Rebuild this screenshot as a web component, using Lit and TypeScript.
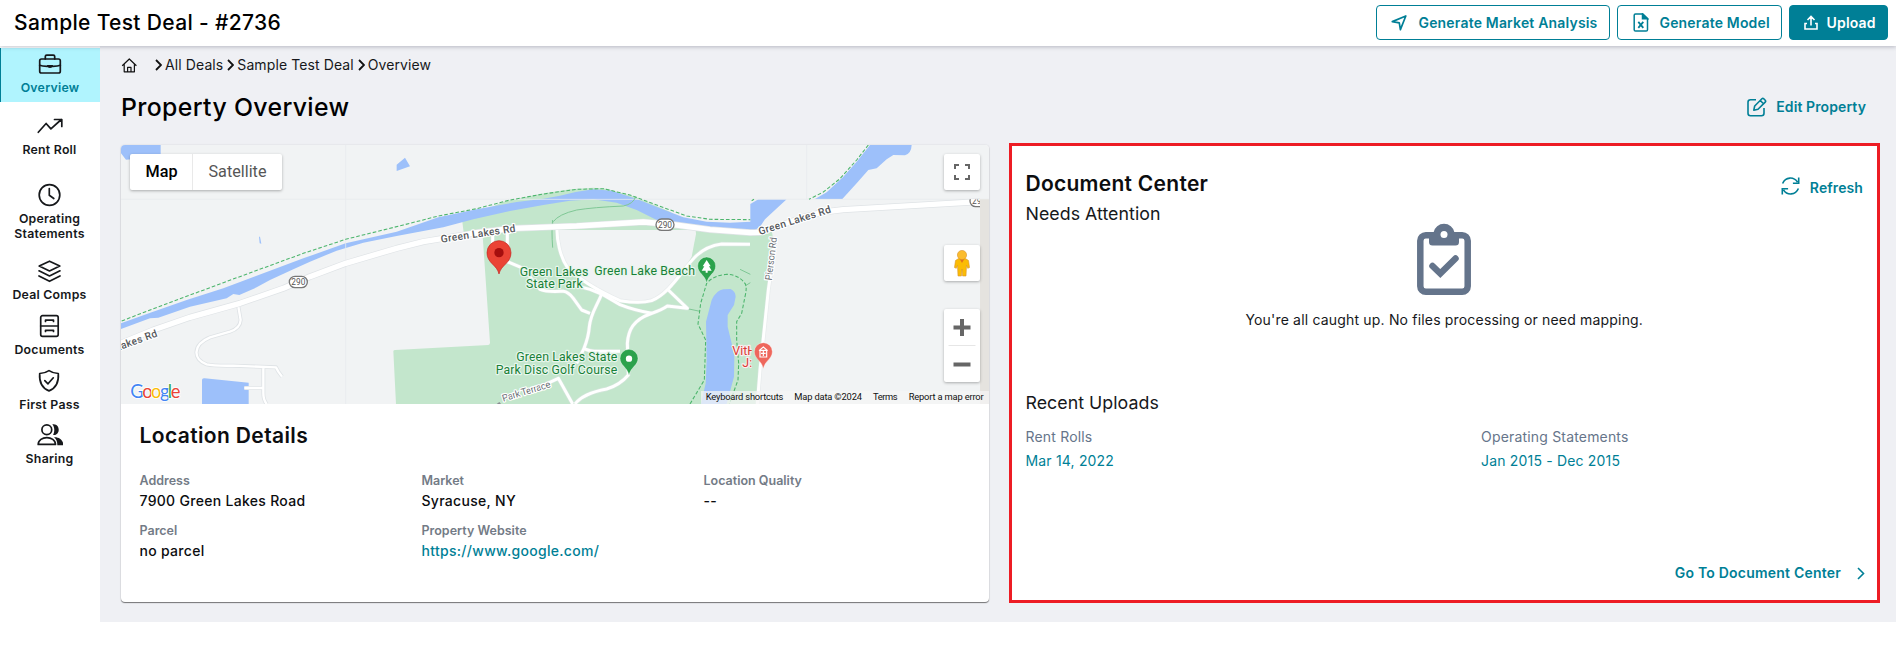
import { LitElement, html, css, svg } from "lit";
import { customElement } from "lit/decorators.js";

const navIcons: Record<string, unknown> = {
  Overview: svg`<rect x="2.200" y="7" width="20.600" height="14" rx="1.800"/><path d="M7.800 7V4.500c0-.9.6-1.400 1.400-1.400h6.600c.8 0 1.400.5 1.400 1.400V7M2.200 13.300c2 .9 4.500 1 7.500 1M15.300 14.300c3 0 5.500-.1 7.500-1"/><path d="M9.500 13h6c0 2-1 3-3 3s-3-1-3-3z" fill="currentColor" stroke="none"/>`,
  "Rent Roll": svg`<path d="M.800 18.300 8.600 9.500l4.800 5.400L23.800 5.500M17 5.500h7.300v7"/>`,
  "Operating Statements": svg`<circle cx="12" cy="12" r="10.300"/><path d="M11.800 5.500v6.800l4.500 3.200"/>`,
  "Deal Comps": svg`<path d="M12 2.200 22.300 7.100 12 11.900 1.700 7.100z"/><path d="M1.500 11.800 12 16.900l10.500-5.100M1.500 16.900 12 22.300l10.500-5.400"/>`,
  Documents: svg`<rect x="3.200" y="1.700" width="17.500" height="20.600" rx="1.800"/><path d="M3.200 12h17.500M8 7.400V6.200h8v1.200M8 17.500v-1.200h8v1.200"/>`,
  "First Pass": svg`<path d="M11.500 1.600c3 2 6.200 2.800 9.300 2.900.6 8.500-2.500 14.700-9.300 17.400C4.700 19.200 1.600 13 2.200 4.500c3.100-.1 6.300-.9 9.300-2.900z"/><path d="m7.300 11.600 3.200 3.200 5.300-6"/>`,
  Sharing: svg`<circle cx="9.300" cy="6.700" r="4.900"/><path d="M.700 21.400c.1-9 17.200-9 17.300 0z"/><path d="M14.800 1.300c8-1.700 8.800 11.300.8 10.700 1.600-3 1.800-7.600-.8-10.700zM16.500 14.200c5.500-.3 9 2.800 9.500 8h-6.200c.1-3.500-.8-6-3.300-8z" fill="currentColor" stroke="none"/>`,
};

const nav: [string, string][] = [
  ["Overview", "active"],
  ["Rent Roll", "wide"],
  ["Operating Statements", "two"],
  ["Deal Comps", ""],
  ["Documents", ""],
  ["First Pass", "last"],
  ["Sharing", ""],
];

const details: [string, string][] = [
  ["Address", "7900 Green Lakes Road"],
  ["Market", "Syracuse, NY"],
  ["Location Quality", "--"],
  ["Parcel", "no parcel"],
  ["Property Website", "https://www.google.com/"],
];

const mainRoad =
  "M20 645 130 600 240 562 390 520 520 475 600 440 707 400 860 355 940 335 1000 325 1100 308 1210 295 1400 288 1600 276 1690 284 1800 299 1920 308 1950 307 2000 290 2080 262 2140 246 2200 239 2610 215";
const parkRoads = [
  "M1341 290C1340 330 1350 380 1372 412C1410 450 1470 485 1530 512Q1590 522 1625 512C1680 490 1720 415 1758 378Q1790 348 1835 342L1920 343",
  "M1148 300V345M1192 300V395L1240 415 1290 478Q1310 486 1350 484H1360Q1375 486 1390 505L1415 540 1440 550",
  "M1372 460 1440 478 1475 492 1530 524Q1570 540 1625 550",
  "M1475 492C1460 530 1442 550 1438 590Q1436 620 1422 655Q1440 665 1470 664L1530 664M1422 655 1400 700",
  "M1675 480 1732 535 1672 528Q1655 540 1620 552C1570 570 1555 600 1552 640L1555 735Q1530 765 1490 777Q1420 790 1395 822",
  "M1270 780 1345 745 1388 822",
  "M1997 320 1975 480 1950 720 1942 822",
];
const sideRoads =
  "M385 530 392 570Q390 595 360 605L300 622C245 645 250 690 290 703Q310 708 370 707L498 712 505 725 516 740M460 710V790Q460 810 470 822M403 774H460";

@customElement("deal-map")
class DealMap extends LitElement {
  static styles = css`
    :host { display: block; position: relative; height: 259px; overflow: hidden; font-family: Roboto, sans-serif; letter-spacing: normal; }
    .canvas { display: block; }
    .water { fill: #9dc0fa; }
    .park { fill: #c3e6cc; }
    .land { fill: #f1f3f4; }
    .seam { stroke: #e9ebed; stroke-width: 3; fill: none; }
    .case { fill: none; stroke: #dfe3e6; stroke-linejoin: round; }
    .road { fill: none; stroke: #fff; stroke-linejoin: round; }
    .trail { fill: none; stroke: #4db56d; stroke-width: 3.200; stroke-dasharray: 11 6; }
    .path { fill: none; stroke: #7fc795; stroke-width: 3; }
    .lbl { paint-order: stroke; stroke: #fff; stroke-width: 7; stroke-linejoin: round; }
    .roadname { font-size: 31px; font-weight: 500; fill: #55585c; }
    .minor { font-size: 29px; fill: #6b6f75; }
    .poi { font-size: 37px; fill: #188038; stroke: #e8f6ec; font-weight: 400; }
    .red { fill: #d93a36; stroke: #fbeeee; }
    .shield { fill: #fff; stroke: #777; stroke-width: 4; }
    .num { font-size: 25px; fill: #555; text-anchor: middle; }
    .foot { font-size: 28px; fill: #111; }
    .logo { font-family: Lato, sans-serif; font-size: 55px; paint-order: stroke; stroke: #fff; stroke-width: 5; }
    .types { position: absolute; left: 9px; top: 9px; display: flex; height: 36px; background: #fff; border-radius: 2px; box-shadow: 0 1px 3px rgba(0, 0, 0, .3); font-size: 16.200px; line-height: 35px; color: #565656; text-align: center; }
    .type { width: 89px; }
    .on { width: 63px; color: #000; font-weight: 500; box-shadow: inset -1px 0 #e9e9e9; }
    .tools { position: absolute; right: 9px; top: 9px; display: grid; }
    .tool { display: grid; place-items: center; width: 36px; height: 36px; background: #fff; border-radius: 2px; box-shadow: 0 1px 3px rgba(0, 0, 0, .3); }
    .peg { margin-top: 55px; }
    .zoom { height: 73px; margin-top: 28px; }
  `;
  private pin(x: number, y: number, color: string, inner: unknown) {
    return svg`<g transform="translate(${x} ${y})"><path d="M0 0C-5-25-27-29-27-51a27 27 0 0 1 54 0C27-29 5-25 0 0z" fill=${color} stroke="#fff" stroke-opacity=".55" stroke-width="2"/>${inner}</g>`;
  }
  render() {
    return html`
      <svg class="canvas" width="868" height="259" viewBox="33 45 2604 777">
        <rect class="land" x="33" y="45" width="2604" height="777"/>
        <path class="park" d="M1057 275 1130 238 1180 215 1290 192 1380 178 1450 173 1490 176 1575 200 1680 245 1760 300H1985L1990 330 1942 822H858L850 664Q850 660 856 660L1135 645Q1140 644 1140 638L1118 318 1062 316z"/>
        <path class="land" d="M1345 300H1757L1758 312 1745 380 1715 430 1680 478Q1650 512 1600 518H1545Q1450 485 1372 412Q1345 370 1345 300z"/>
        <path class="water" d="M33 45H152V80L48 89 33 70zM860 123V104L885 83 900 109zM447 320 450 320 454 341 449 340zM276 822V750Q276 744 284 745L416 758V822z"/>
        <path class="water" d="M33 580 125 547 230 510 340 475 460 430 580 385 707 340 860 305 985 262 1100 238 1220 216 1300 206 1350 197 1397 186 1450 178 1505 182 1580 207 1650 235 1720 262 1790 275 1860 278 1921 275V222L1945 208H2030L1995 240 1965 268 1950 290 1935 300 1830 298 1730 290 1640 270 1580 240 1520 218 1450 208 1380 212 1300 225 1200 243 1090 268 1000 292 860 318 760 338 680 362 600 395 550 418 480 450 440 472 388 495 370 492 350 505 240 530 145 563 120 565 33 597z"/>
        <path class="water" d="M2280 45H2405Q2404 70 2385 76L2350 75 2330 88 2300 115 2275 120 2240 160 2197 207H2115L2150 187 2200 140 2240 95z"/>
        <path class="water" d="M1788 575 1805 510Q1820 480 1840 478L1862 477Q1877 485 1877 500L1872 525 1853 555V590L1865 640 1873 680 1872 740 1850 822H1773L1787 760 1790 690z"/>
        <path class="seam" d="M33 208H2637M707 45V822M2090 45V208" stroke-opacity=".8"/>
        <path class="path" d="M1330 275Q1345 253 1400 240 1450 232 1540 228 1570 222 1577 200M1328 270Q1324 300 1328 353M1328 275V300M1890 418 1921 433M1737 537 1770 544M1905 468 1921 458"/>
        <path class="trail" d="M35 573 125 538 340 458 580 370 707 328 880 285 985 258 1100 236 1200 210 1300 192 1400 178 1480 176 1560 195 1640 225 1730 258 1800 268 1921 269M2275 45 2240 90 2190 146 2140 186 2097 208M1925 212 1932 208"/>
        <path class="trail" d="M1740 822 1783 750 1787 630 1764 582 1772 520 1790 460Q1810 436 1850 433 1885 434 1905 460 1912 470 1905 500L1895 550 1880 575V630L1886 700 1884 750 1858 822"/>
        <path class="case" stroke-width="12" d=${sideRoads}/>
        <path class="road" stroke-width="7" d=${sideRoads}/>
        ${parkRoads.map((d) => svg`<path class="case" stroke-width="13" stroke-opacity=".55" d=${d}/>`)}
        ${parkRoads.map((d) => svg`<path class="road" stroke-width="9" d=${d}/>`)}
        <path class="case" stroke-width="20" d=${mainRoad}/>
        <path class="road" stroke-width="16" d=${mainRoad}/>
        <rect x="2610" y="208" width="27" height="614" fill="#e5e3df"/>

        ${[[565, 456], [1665, 284]].map(([x, y]) => svg`
          <rect class="shield" x=${x - 27} y=${y - 17} width="54" height="34" rx="17"/>
          <text class="num" x=${x} y=${y + 9}>290</text>`)}
        <svg x="2570" y="208" width="40" height="30" viewBox="2570 208 40 30">
          <rect class="shield" x="2580" y="196" width="54" height="34" rx="17"/>
          <text class="num" x="2607" y="223">290</text>
        </svg>

        <text class="lbl roadname" transform="translate(20 664) rotate(-20)" textLength="132">Lakes Rd</text>
        <text class="lbl roadname" transform="translate(994 338) rotate(-8.500)" textLength="226">Green Lakes Rd</text>
        <text class="lbl roadname" transform="translate(1949 315) rotate(-17.500)" textLength="226">Green Lakes Rd</text>
        <text class="lbl minor" transform="translate(1985 452) rotate(-83)" textLength="130">Pierson Rd</text>
        <text class="lbl minor" transform="translate(1180 815) rotate(-17)" textLength="150">Park Terrace</text>
        <path d="M1160 822l8-6 5 6z" fill="#8a8d92"/>

        <text class="lbl poi" x="1229" y="437" textLength="206">Green Lakes</text>
        <text class="lbl poi" x="1248" y="474" textLength="170">State Park</text>
        <text class="lbl poi" x="1453" y="434" textLength="302">Green Lake Beach</text>
        <text class="lbl poi" x="1219" y="693" textLength="303">Green Lakes State</text>
        <text class="lbl poi" x="1157" y="731" textLength="365">Park Disc Golf Course</text>
        <svg x="1850" y="630" width="75" height="100" viewBox="1850 630 75 100">
          <text class="lbl poi red" x="1867" y="674">VitH</text>
          <text class="lbl poi red" x="1897" y="712">J:</text>
        </svg>

        ${this.pin(1790, 459, "#2ba24c", svg`<path d="M0-69 12-50H7L15-37H3V-31H-3V-37H-15L-7-50H-12z" fill="#fff"/>`)}
        ${this.pin(1557, 736, "#2ba24c", svg`<circle cy="-50" r="9.500" fill="#fff"/>`)}
        ${this.pin(1960, 716, "#ee675c", svg`<path d="M-13-54 0-65 13-54M-10-55V-35H10V-55zM0-53V-38M-7-46H7" fill="none" stroke="#fff" stroke-width="3.500"/>`)}
        <path d="M1167 432C1161 404 1131 400 1131 368a36 36 0 0 1 72 0C1203 400 1173 404 1167 432z" fill="#ea4335" stroke="#c5221f" stroke-width="2"/>
        <circle cx="1167" cy="368" r="14" fill="#a50e0e"/>

        <text class="logo" x="61" y="803" textLength="150"><tspan fill="#4285f4">G</tspan><tspan fill="#ea4335">o</tspan><tspan fill="#fbbc04">o</tspan><tspan fill="#4285f4">g</tspan><tspan fill="#34a853">l</tspan><tspan fill="#ea4335">e</tspan></text>
        <rect x="1773" y="783" width="864" height="39" fill="#f5f5f5" fill-opacity=".72"/>
        <text class="foot" x="1787" y="810" textLength="233">Keyboard shortcuts</text>
        <text class="foot" x="2053" y="810" textLength="203">Map data ©2024</text>
        <text class="foot" x="2289" y="810" textLength="74">Terms</text>
        <text class="foot" x="2396" y="810" textLength="225">Report a map error</text>
      </svg>
      <div class="types"><div class="type on">Map</div><div class="type">Satellite</div></div>
      <div class="tools">
        <div class="tool"><svg width="16" height="16" viewBox="0 0 16 16" fill="none" stroke="#666" stroke-width="2"><path d="M1 5V1h4M11 1h4v4M15 11v4h-4M5 15H1v-4"/></svg></div>
        <div class="tool peg"><svg width="16" height="27" viewBox="0 0 16 27"><path d="M1.500 10.500 4.500 8.600h7l3 1.900 1 7-1.800.8-1.200-3-.5 10.700H8.600L8 19l-.6 7H4L3.500 15.300l-1.200 3-1.800-.8z" fill="#fbbc04" stroke="#d9932b" stroke-width=".6"/><path d="M5.500 8.800h5L8 13z" fill="#e2711d"/><circle cx="8" cy="5" r="4.600" fill="#fbbc2e" stroke="#d9932b" stroke-width=".6"/></svg></div>
        <div class="tool zoom"><svg width="28" height="73" viewBox="0 0 28 73" fill="none" stroke="#666" stroke-width="4"><path d="M14 10v17M5.500 18.500h17M5.500 55.500h17"/><path d="M.500 36.500h27" stroke="#e6e6e6" stroke-width="1"/></svg></div>
      </div>`;
  }
}

@customElement("app-root")
class AppRoot extends LitElement {
  static styles = css`
    :host { display: block; height: 648px; background: #fff; font-family: Inter, sans-serif; font-size: 14px; line-height: 20px; letter-spacing: .18px; color: #16181b; overflow: hidden; }
    * { box-sizing: border-box; }
    svg { flex: none; display: block; }
    .top { display: flex; align-items: flex-start; height: 46px; padding: 5px 8px 0 14px; background: #fff; position: relative; z-index: 1; box-shadow: 0 1px 4px rgba(40, 40, 70, .28); }
    .deal { flex: 1; font-size: 21px; font-weight: 500; line-height: 35px; letter-spacing: .33px; color: #000; }
    .btns { display: flex; gap: 7px; }
    .btn { display: flex; align-items: center; height: 35px; border: 1px solid #007f96; border-radius: 4px; color: #007f96; font-weight: 600; background: #fff; white-space: nowrap; }
    .market { width: 234px; padding-left: 14px; } .market svg { margin-right: 11.500px; }
    .model { width: 165px; padding-left: 15px; } .model svg { margin-right: 10.500px; }
    .upload { width: 99px; padding-left: 14px; background: #007f96; color: #fff; } .upload svg { margin-right: 8.500px; }
    .body { display: flex; }
    .nav { width: 100px; height: 576px; padding-top: 2px; background: #fff; font-size: 12.300px; font-weight: 600; line-height: 15px; letter-spacing: .25px; text-align: center; }
    .item { display: grid; justify-items: center; gap: 4px; margin-bottom: 12px; padding: 0 8px 0 7px; }
    .active { height: 54px; padding-top: 4px; background: #b0f4fe; border-left: 1px solid #007f96; align-content: start; }
    .active .name { color: #007f96; }
    .wide { margin-bottom: 26px; }
    .two { margin-bottom: 18px; }
    .last { margin-bottom: 11px; }
    .main { flex: 1; height: 576px; padding: 9px 16px 0 21px; background: #eff0f4; }
    .crumbs { display: flex; align-items: center; height: 20px; letter-spacing: .1px; }
    .crumbs .sep { margin: 0 3px 0 4px; }
    .crumbs .first { margin-left: 18px; }
    .head { display: flex; justify-content: space-between; align-items: center; height: 32px; margin-top: 16px; padding-right: 14px; }
    .h1 { font-size: 24.800px; font-weight: 500; line-height: 34px; letter-spacing: .36px; color: #000; }
    .link { display: flex; align-items: center; color: #007f96; font-weight: 600; letter-spacing: .1px; }
    .edit { gap: 9px; }
    .cols { display: grid; grid-template-columns: 868px 871px; gap: 20px; margin-top: 20px; }
    .card { height: 457px; margin-top: 2px; background: #fff; border-radius: 4px; box-shadow: 0 1px 1px rgba(0, 0, 0, .5), 0 0 2px rgba(0, 0, 0, .12); overflow: hidden; }
    .loc { padding: 18px 18.500px; }
    .h2 { font-size: 21px; font-weight: 600; line-height: 28px; letter-spacing: .37px; color: #0c0d0f; }
    .fields { display: grid; grid-template-columns: repeat(3, 282px); row-gap: 10px; margin-top: 21px; }
    .label { font-size: 12.500px; font-weight: 600; letter-spacing: 0; color: #737b86; }
    .value { font-weight: 500; letter-spacing: .3px; color: #0c0d0f; }
    .url { color: #007f96; }
    .doc { display: flex; flex-direction: column; height: 460px; padding: 24px 14px 0 13.500px; border: 3px solid #ed1c24; background: #fff; }
    .doc .h2 { letter-spacing: .27px; }
    .dochead { display: flex; justify-content: space-between; height: 28px; }
    .refresh { height: 20px; margin-top: 8px; gap: 10px; }
    .refresh svg { margin-top: -4px; }
    .h3 { font-size: 17.800px; line-height: 24px; margin-top: 4px; letter-spacing: .03px; }
    .empty { display: grid; justify-items: center; margin-top: -3px; }
    .msg { margin-top: 15px; }
    .recent { margin-top: 61px; }
    .ups { display: grid; grid-template-columns: 455.500px 1fr; row-gap: 4px; margin-top: 12px; }
    .muted { color: #66758a; }
    .teal { color: #007f96; }
    .go { align-self: flex-end; letter-spacing: .21px; gap: 16px; margin: 92px -2px 0 0; }
  `;
  render() {
    const sep = (c = "") => html`<svg class="sep ${c}" width="7" height="12" viewBox="0 0 7 12" fill="none" stroke="#111" stroke-width="1.800"><path d="m1 1 5 5-5 5"/></svg>`;
    return html`
      <header class="top">
        <div class="deal">Sample Test Deal - #2736</div>
        <div class="btns">
          <div class="btn market"><svg width="16" height="16" viewBox="0 0 16 16" fill="none" stroke="currentColor" stroke-width="1.700" stroke-linejoin="round"><path d="M14.800 1 9.400 14.600 8.300 7.900 1.300 6.600z"/></svg><span>Generate Market Analysis</span></div>
          <div class="btn model"><svg width="16" height="19" viewBox="0 0 16 19" fill="none" stroke="currentColor" stroke-width="1.500"><path d="M9.800 1H2.500Q1.200 1 1.200 2.300V16.700Q1.200 18 2.500 18H13.200Q14.500 18 14.500 16.700V5.500z"/><path d="M9.500 1v4.700h5z" fill="currentColor"/><path d="m5.300 8.800 5 6M10.300 8.800l-5 6" stroke-width="1.800"/></svg><span>Generate Model</span></div>
          <div class="btn upload"><svg width="14" height="15" viewBox="0 0 14 15" fill="none" stroke="currentColor" stroke-width="1.600"><path d="M7 10.500V1.500M3.500 5 7 1.500 10.500 5M3 8.500H1V14h12V8.500h-2"/></svg><span>Upload</span></div>
        </div>
      </header>
      <div class="body">
        <nav class="nav">
          ${nav.map(([n, c]) => html`<div class="item ${c}"><svg width="26" height="24" viewBox="-.500 0 26 24" fill="none" stroke="currentColor" stroke-width="1.700" stroke-linejoin="round" stroke-linecap="round">${navIcons[n]}</svg><div class="name">${n}</div></div>`)}
        </nav>
        <main class="main">
          <div class="crumbs">
            <svg width="16" height="16" viewBox="0 0 16 16" fill="none" stroke="#111" stroke-width="1.200" stroke-linejoin="round"><path d="M1.200 8.700 8.300 2l7.100 6.700M3.200 7.200v7.600h10.200V7.200M6.600 14.600v-4.200h3.400v4.200"/></svg>
            ${sep("first")}<span>All Deals</span>${sep()}<span>Sample Test Deal</span>${sep()}<span>Overview</span>
          </div>
          <div class="head">
            <div class="h1">Property Overview</div>
            <div class="link edit"><svg width="20" height="20" viewBox="0 0 20 20" fill="none" stroke="currentColor" stroke-width="1.600" stroke-linejoin="round"><path d="M9 2.800H3.500Q1 2.800 1 5.300v11Q1 18.800 3.500 18.800h11q2.500 0 2.500-2.500V11"/><path d="m6.800 13.200.9-4.200 7.200-7.200q.9-.9 1.900 0l1.400 1.400q.9 1 0 1.900L11 12.300zM13.300 3.500l3.200 3.200"/></svg><span>Edit Property</span></div>
          </div>
          <div class="cols">
            <section class="card">
              <deal-map></deal-map>
              <div class="loc">
                <div class="h2">Location Details</div>
                <div class="fields">
                  ${details.map(([k, v]) => html`<div><div class="label">${k}</div><div class="value ${v.startsWith("http") ? "url" : ""}">${v}</div></div>`)}
                </div>
              </div>
            </section>
            <section class="doc">
              <div class="dochead">
                <div class="h2">Document Center</div>
                <div class="link refresh"><svg width="19" height="18" viewBox="0 0 19 18" fill="none" stroke="currentColor" stroke-width="1.600"><path d="M1.600 6.500C4.500-.5 13-.5 16.500 5.200M17.700.500v5.700h-5.800M17.400 11.500c-2.900 7-11.400 7-14.900 1.300M1.300 17.500v-5.700h5.800"/></svg><span>Refresh</span></div>
              </div>
              <div class="h3">Needs Attention</div>
              <div class="empty">
                <svg width="54" height="72" viewBox="0 0 54 72" fill="none" stroke="#64748b"><rect x="3.300" y="12.300" width="47.400" height="56.400" rx="5.500" stroke-width="6.500"/><path d="M16.500 9.500a10.700 10.700 0 0 1 21 0H42V19q0 3.500-3.500 3.500h-23Q12 22.500 12 19V9.500z" fill="#64748b" stroke="none"/><circle cx="27" cy="11.500" r="3.500" fill="#fff" stroke="none"/><path d="m15.500 43 7.800 7.500L38.500 35.500" stroke-width="6.500" stroke-linecap="round"/></svg>
                <div class="msg">You're all caught up. No files processing or need mapping.</div>
              </div>
              <div class="h3 recent">Recent Uploads</div>
              <div class="ups">
                <div class="muted">Rent Rolls</div><div class="muted">Operating Statements</div>
                <div class="teal">Mar 14, 2022</div><div class="teal">Jan 2015 - Dec 2015</div>
              </div>
              <div class="link go"><span>Go To Document Center</span><svg width="8" height="13" viewBox="0 0 8 13" fill="none" stroke="currentColor" stroke-width="1.600"><path d="m1 1 5.500 5.500L1 12"/></svg></div>
            </section>
          </div>
        </main>
      </div>`;
  }
}
